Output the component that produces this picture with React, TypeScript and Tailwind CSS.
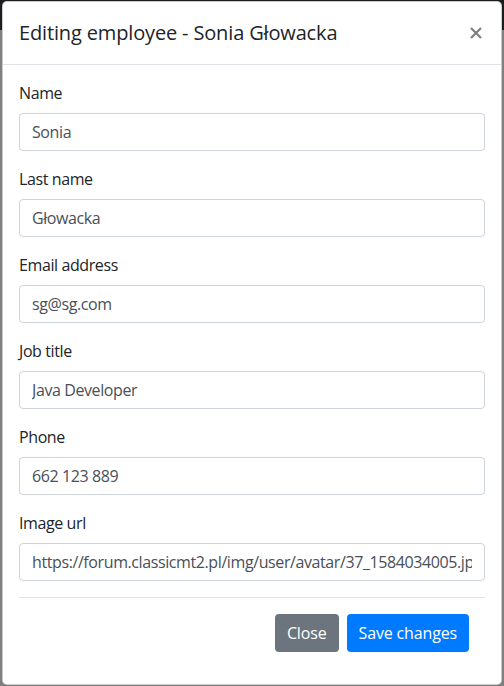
import React from "react";

const fields = [
  { label: "Name", value: "Sonia" },
  { label: "Last name", value: "Głowacka" },
  { label: "Email address", value: "sg@sg.com" },
  { label: "Job title", value: "Java Developer" },
  { label: "Phone", value: "662 123 889" },
  { label: "Image url", value: "https://forum.classicmt2.pl/img/user/avatar/37_1584034005.jpg" },
];

export default function App() {
  return (
    <div
      className="w-[504px] h-[686px] overflow-hidden pt-px pl-[2px] bg-[linear-gradient(to_bottom,#1b1d20_30px,#7f7f7f_30px)]"
      style={{ fontFamily: '"Open Sans", "Noto Sans", sans-serif' }}
    >
      <div className="w-[500px] rounded-[5px] border border-black/20 bg-white text-[#212529]">
        <div className="flex items-start justify-between border-b border-[#dee2e6] p-4">
          <h5 className="text-[20px] leading-[30px] font-medium tracking-[-0.15px]">Editing employee - Sonia Głowacka</h5>
          <button className="ml-auto mr-[3px] mt-[9px] flex h-[12px] w-[12px] items-center justify-center" aria-label="Close">
            <svg width="12" height="12" viewBox="0 0 12 12">
              <path d="M1 1 L11 11 M11 1 L1 11" stroke="#000" strokeOpacity="0.5" strokeWidth="2.2" strokeLinecap="butt" />
            </svg>
          </button>
        </div>
        <div className="p-4">
          {fields.map((f) => (
            <div key={f.label} className="mb-4">
              <label className="mb-2 block text-[16px] leading-6 tracking-[-0.4px]">{f.label}</label>
              <input
                readOnly
                value={f.value}
                className="block h-[38px] w-full rounded-[4px] border border-[#ced4da] bg-white px-3 py-[6px] text-[16px] leading-6 text-[#495057] outline-none tracking-[-0.4px]"
              />
            </div>
          ))}
          <div className="flex items-center justify-end border-t border-[#dee2e6] p-3">
            <button className="m-1 h-[38px] rounded-[4px] bg-[#6c757d] px-3 text-[16px] leading-6 tracking-[-0.15px] text-white">Close</button>
            <button className="m-1 h-[38px] rounded-[4px] bg-[#007bff] px-3 text-[16px] leading-6 tracking-[-0.15px] text-white">Save changes</button>
          </div>
        </div>
      </div>
    </div>
  );
}
